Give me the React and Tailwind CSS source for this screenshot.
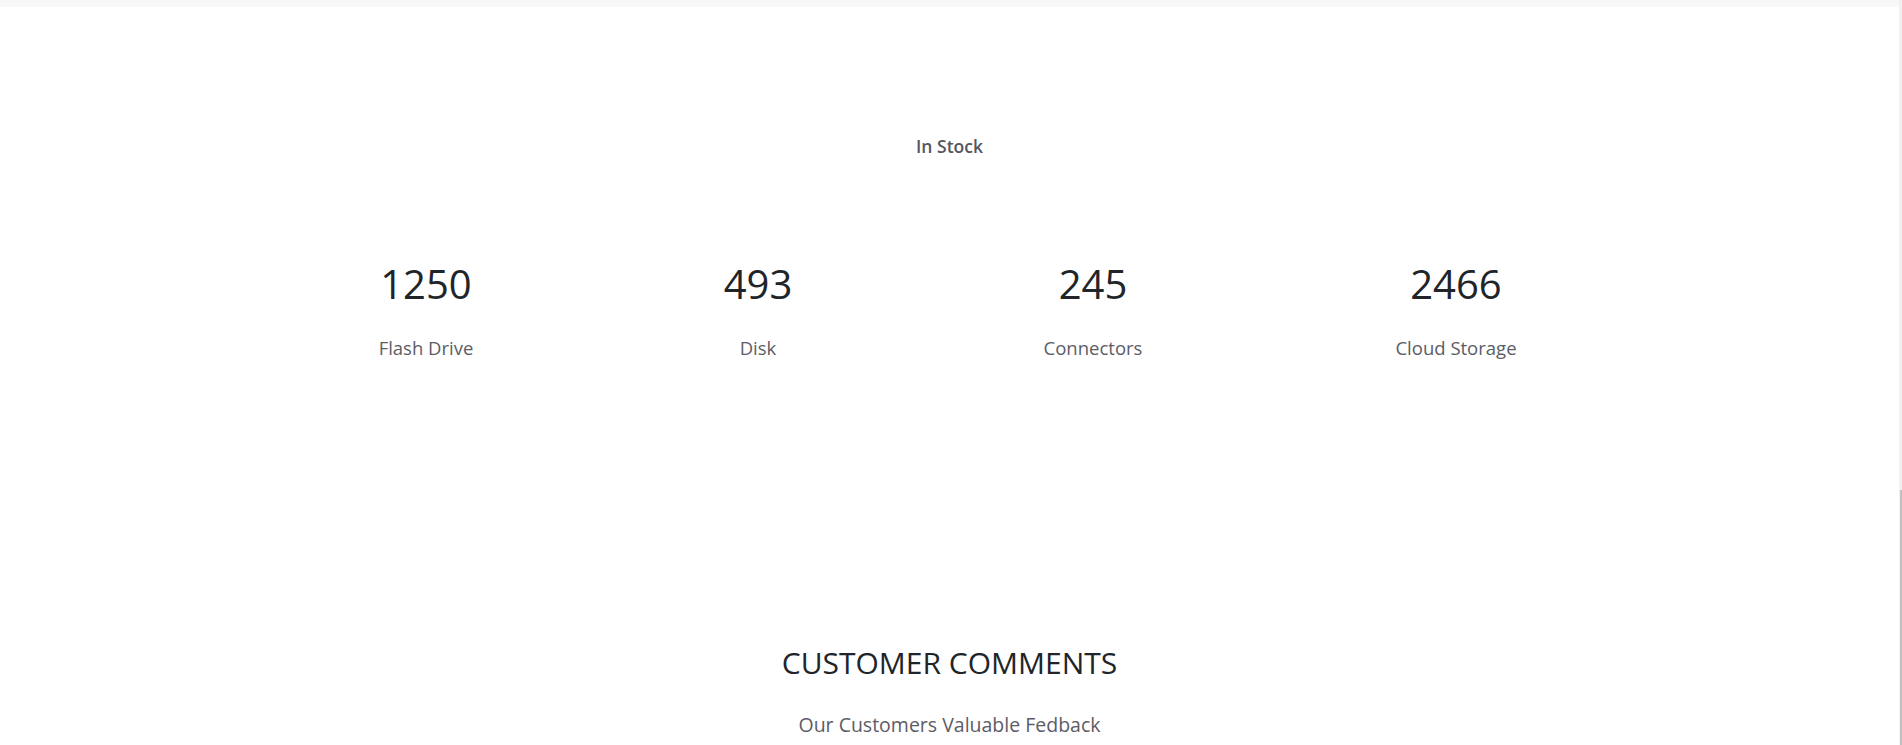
import React from 'react';

const stats = [
  { value: '1250', label: 'Flash Drive', width: 'w-[356px]' },
  { value: '493', label: 'Disk', width: 'w-[308px]' },
  { value: '245', label: 'Connectors', width: 'w-[362px]' },
  { value: '2466', label: 'Cloud Storage', width: 'w-[364px]' },
];

function StatItem({ value, label, width }) {
  return (
    <div className={`${width} flex flex-col items-center`}>
      <div className="text-[40px] leading-[53px] text-[#212529]">{value}</div>
      <div className="mt-[26px] text-[18.5px] leading-6 text-[#5c5c66]">{label}</div>
    </div>
  );
}

export default function App() {
  return (
    <div
      className="min-h-screen bg-white flex"
      style={{ fontFamily: '"Open Sans", "Noto Sans", Arial, sans-serif' }}
    >
      <div className="flex-1 flex flex-col">
        {/* top strip */}
        <div className="h-[7px] bg-[#f7f7f8]" />

        {/* In stock section */}
        <section className="pt-[127px] pb-[285px] flex flex-col items-center">
          <h6 className="text-[17.5px] leading-6 font-semibold text-[#55555e]">In Stock</h6>
          <div className="mt-[99px] flex justify-center pl-[248px] self-start">
            {stats.map((s) => (
              <StatItem key={s.label} {...s} />
            ))}
          </div>
        </section>

        {/* Comments section */}
        <section className="flex flex-col items-center">
          <h2 className="text-[30px] leading-9 text-[#212529]">CUSTOMER COMMENTS</h2>
          <p className="mt-[32px] text-[19.5px] leading-6 text-[#5c5c66]">Our Customers Valuable Fedback</p>
        </section>
      </div>
      <div className="w-[3px] bg-[#f1f1f1] flex flex-col">
        <div className="h-[490px]" />
        <div className="flex-1 w-[2px] ml-[1px] bg-[#c1c1c1]" />
      </div>
    </div>
  );
}
